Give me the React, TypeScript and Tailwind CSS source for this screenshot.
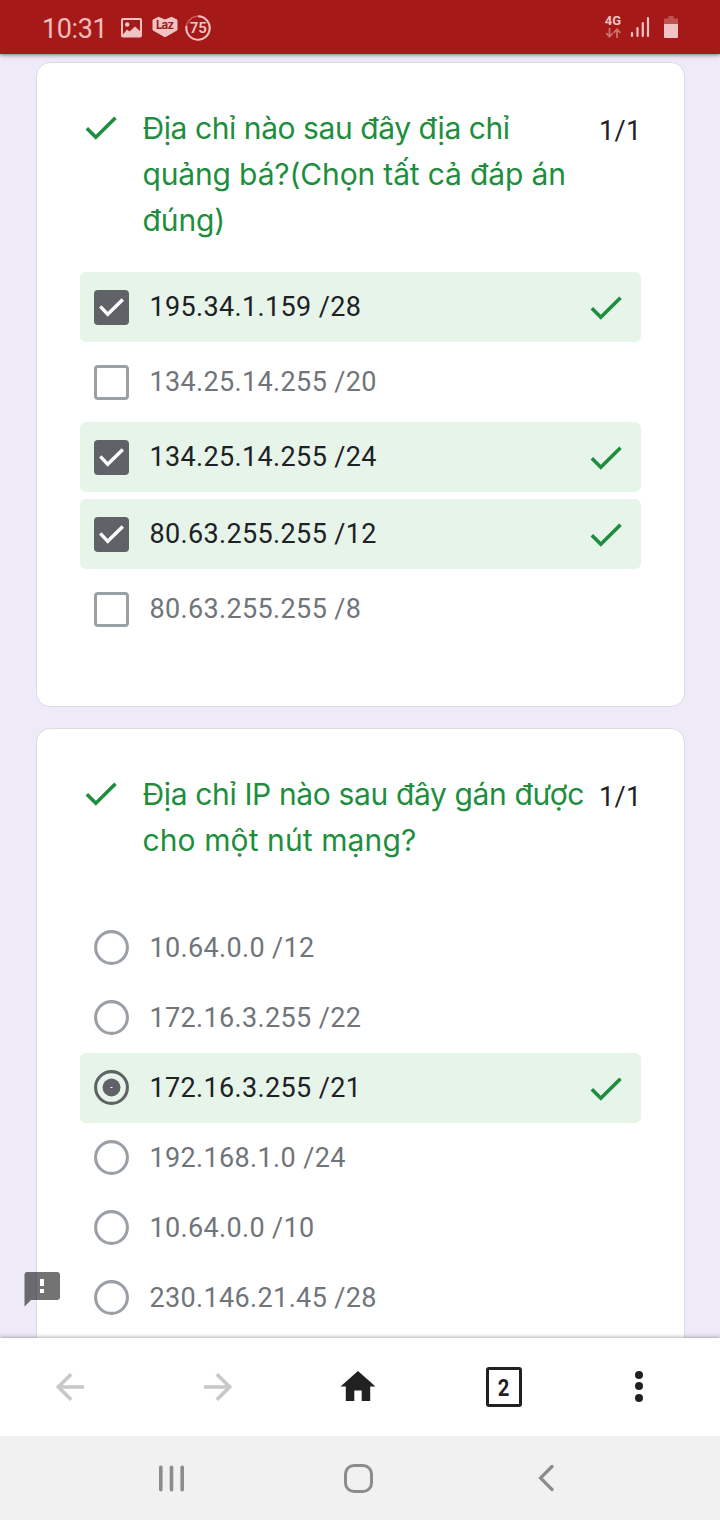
type Line = { text: string; spacing: string };
type Option = { label: string; checked?: boolean; gap?: string };

function GreenCheck({ className = "" }: { className?: string }) {
  return (
    <svg className={`block h-[42px] w-[42px] shrink-0 ${className}`} viewBox="0 0 42 42" fill="none" stroke="#1e8e3e" strokeWidth="3.6">
      <path d="M6.8 20.3 L15.8 29.3 L35.5 9.8" />
    </svg>
  );
}

function CheckBox({ checked }: { checked?: boolean }) {
  if (!checked) {
    return <span className="h-[35px] w-[35px] shrink-0 rounded-[4px] border-[3px] border-[#9aa0a6]" />;
  }
  return (
    <span className="flex h-[35px] w-[35px] shrink-0 items-center justify-center rounded-[4px] bg-[#5f6368]">
      <svg className="h-[35px] w-[35px]" viewBox="0 0 35 35" fill="none" stroke="#fff" strokeWidth="3.4">
        <path d="M6.3 16.3 L13.7 24.3 L28.8 9.5" />
      </svg>
    </span>
  );
}

function Radio({ checked }: { checked?: boolean }) {
  return (
    <svg className="mb-px h-[35px] w-[35px] shrink-0" viewBox="0 0 35 35">
      <circle cx="17.5" cy="17.5" r="15.9" fill="none" stroke={checked ? "#5f6368" : "#9aa0a6"} strokeWidth="3.1" />
      {checked && <circle cx="17.5" cy="17.5" r="9" fill="#5f6368" />}
      {checked && <rect x="16.5" y="17" width="2" height="1" fill="#fff" />}
    </svg>
  );
}

function Question({
  lines,
  options,
  kind,
  className,
  listClass,
}: {
  lines: Line[];
  options: Option[];
  kind: "check" | "radio";
  className: string;
  listClass: string;
}) {
  return (
    <section className={`ml-9 w-[649px] shrink-0 rounded-[14px] border border-[#dadce0] bg-white pt-[42px] pr-[43px] pl-[43px] ${className}`}>
      <header className="flex items-start">
        <div className="mt-[3px] w-[62.5px] shrink-0">
          <GreenCheck />
        </div>
        <h2 className="flex-1 font-['Inter','Noto_Sans',sans-serif] text-[30px] leading-[46px] font-normal whitespace-nowrap text-[#1e8e3e]">
          {lines.map((l) => (
            <span key={l.text} className={`block ${l.spacing}`}>
              {l.text}
            </span>
          ))}
        </h2>
        <span className="mt-[3px] w-[42px] shrink-0 text-[27px] leading-[46px] tracking-[0.4px] text-[#202124]">1/1</span>
      </header>
      <ul className={listClass}>
        {options.map((o) => (
          <li
            key={o.label}
            className={`flex h-[70px] items-center rounded-[6px] pr-[14px] pl-[14px] ${o.gap ?? ""} ${
              o.checked ? "bg-[#e6f4ea] text-[#202124]" : "text-[#70757a]"
            }`}
          >
            {kind === "check" ? <CheckBox checked={o.checked} /> : <Radio checked={o.checked} />}
            <span className="ml-[20.5px] flex-1 text-[27px] leading-[40px] tracking-[0.35px]">{o.label}</span>
            {o.checked && <GreenCheck className="mt-[3px]" />}
          </li>
        ))}
      </ul>
    </section>
  );
}

const broadcastLines: Line[] = [
  { text: "Địa chỉ nào sau đây địa chỉ", spacing: "tracking-[-0.43px]" },
  { text: "quảng bá?(Chọn tất cả đáp án", spacing: "tracking-[-0.15px]" },
  { text: "đúng)", spacing: "tracking-[-0.1px]" },
];
const hostLines: Line[] = [
  { text: "Địa chỉ IP nào sau đây gán được", spacing: "tracking-[-0.36px]" },
  { text: "cho một nút mạng?", spacing: "tracking-[0.1px]" },
];
const broadcastOptions: Option[] = [
  { label: "195.34.1.159 /28", checked: true },
  { label: "134.25.14.255 /20", gap: "mt-[5px]" },
  { label: "134.25.14.255 /24", checked: true, gap: "mt-[5px]" },
  { label: "80.63.255.255 /12", checked: true, gap: "mt-[7px]" },
  { label: "80.63.255.255 /8", gap: "mt-[5px]" },
];
const hostOptions: Option[] = [
  { label: "10.64.0.0 /12" },
  { label: "172.16.3.255 /22" },
  { label: "172.16.3.255 /21", checked: true },
  { label: "192.168.1.0 /24" },
  { label: "10.64.0.0 /10" },
  { label: "230.146.21.45 /28" },
];

function StatusBar() {
  return (
    <div className="z-10 flex h-[54px] shrink-0 items-center bg-[#a51a18] pl-[42px] text-[#f0c4c4] shadow-[0_1px_4px_rgba(0,0,0,0.5)]">
      <span className="w-[78px] pt-[3px] text-[27px] leading-[54px] tracking-[-0.4px] text-[#f3bcbc]">10:31</span>
      <svg className="mt-px h-[22px] w-[22px]" viewBox="0 0 22 22">
        <rect x="2" y="2" width="19" height="17.5" rx="1" fill="none" stroke="currentColor" strokeWidth="2" />
        <circle cx="7.2" cy="7.5" r="2.2" fill="currentColor" />
        <path d="M3 17.5 L7 12.5 L9.5 14.5 L15 9.5 L20 14 V19 H3 Z" fill="currentColor" />
      </svg>
      <svg className="mt-px ml-[9.5px] h-[24px] w-[26px]" viewBox="0 0 26 24">
        <path d="M1 4 L6.5 1.3 L13 4 L19.5 1.3 L25 4 V14 L13 20.8 L1 14 Z" fill="currentColor" stroke="currentColor" strokeWidth="1" strokeLinejoin="round" />
        <text x="13" y="13.2" textAnchor="middle" textLength="18" fontFamily="Inter, sans-serif" fontSize="11.5" fontWeight="700" fill="#a51a18">
          Laz
        </text>
      </svg>
      <svg className="mt-px ml-[6.5px] h-[28px] w-[28px]" viewBox="0 0 28 28">
        <circle cx="14" cy="14" r="11.7" fill="none" stroke="currentColor" strokeOpacity="0.4" strokeWidth="1.6" />
        <path d="M14 2.3 A11.7 11.7 0 1 1 2.5 12" fill="none" stroke="currentColor" strokeWidth="2" />
        <text x="14.2" y="19.3" textAnchor="middle" fontFamily="Roboto, sans-serif" fontSize="15" fontWeight="600" fill="currentColor">
          75
        </text>
      </svg>
      <div className="mb-[2px] ml-[392px] flex w-[18px] flex-col items-center">
        <span className="text-[13px] leading-[13px] font-bold">4G</span>
        <svg className="mt-px h-[10px] w-[16px]" viewBox="0 0 16 10" fill="none" stroke="currentColor" strokeOpacity="0.5" strokeWidth="1.8">
          <path d="M4.5 0 V8.5 M1.2 5.2 L4.5 8.8 L7.8 5.2 M12 10 V1.5 M8.7 4.8 L12 1.2 L15.3 4.8" />
        </svg>
      </div>
      <svg className="ml-[8px] h-[22px] w-[20px]" viewBox="0 0 20 22" stroke="currentColor" strokeWidth="2.2" strokeLinecap="round">
        <path d="M2 17 V20 M7.5 12 V20 M12.8 7 V20 M18 2 V20" />
      </svg>
      <svg className="ml-[14px] h-[22px] w-[14px]" viewBox="0 0 14 22" fill="currentColor">
        <path d="M4.5 0 H9.5 V2.5 H14 V8 H0 V2.5 H4.5 Z" opacity="0.35" />
        <path d="M0 8 H14 V21 Q14 22 13 22 H1 Q0 22 0 21 Z" />
      </svg>
    </div>
  );
}

export default function App() {
  return (
    <div className="relative flex h-[1520px] w-[720px] flex-col overflow-hidden bg-[#eeeaf8] font-['Roboto','Noto_Sans',sans-serif]">
      <StatusBar />
      <main className="flex h-[1284px] shrink-0 flex-col overflow-hidden pt-[8px]">
        <Question kind="check" lines={broadcastLines} options={broadcastOptions} className="h-[645px]" listClass="mt-[29px]" />
        <Question kind="radio" lines={hostLines} options={hostOptions} className="mt-[21px] h-[700px]" listClass="mt-[50px]" />
      </main>
      <svg className="absolute top-[1271px] left-[24px] h-[36px] w-[36px]" viewBox="0 0 36 36">
        <path
          fillRule="evenodd"
          d="M3 1 H33 Q36 1 36 4 V26 Q36 29 33 29 H7 L0.5 35.5 V4 Q0.5 1 3 1 Z M16 8 V15 H20 V8 Z M16 18 V22 H20 V18 Z"
          fill="#000"
          fillOpacity="0.55"
        />
        <path d="M16 8 H20 V15 H16 Z M16 18 H20 V22 H16 Z" fill="#fff" />
      </svg>
      <nav className="z-10 flex h-[98px] shrink-0 items-center bg-white pl-[56px] shadow-[0_-1px_4px_rgba(0,0,0,0.3)]">
        <svg className="h-[28px] w-[28px]" viewBox="0 0 28 28" fill="none" stroke="#c8c8c8" strokeWidth="3.6">
          <path d="M28 14 H2.5 M15.2 1.2 L2.4 14 L15.2 26.8" />
        </svg>
        <svg className="ml-[120px] h-[28px] w-[28px]" viewBox="0 0 28 28" fill="none" stroke="#c8c8c8" strokeWidth="3.6">
          <path d="M0 14 H25.5 M12.8 1.2 L25.6 14 L12.8 26.8" />
        </svg>
        <svg className="mb-[2px] ml-[108px] h-[30px] w-[36px]" viewBox="0 0 36 30" fill="#212121">
          <path d="M18 0 L35.5 15.5 H30.2 V30 H21.7 V19.5 H14.3 V30 H5.8 V15.5 H0.5 Z" />
        </svg>
        <span className="ml-[110px] flex h-[40px] w-[36px] items-center justify-center rounded-[3px] border-[3px] border-[#212121] pt-[2px] text-[23px] leading-none font-bold text-[#212121]">
          <span className="mr-px scale-x-[0.88]">2</span>
        </span>
        <span className="mb-[2px] ml-[113px] flex flex-col gap-[3.5px]">
          <span className="h-[8px] w-[8px] rounded-full bg-[#212121]" />
          <span className="h-[8px] w-[8px] rounded-full bg-[#212121]" />
          <span className="h-[8px] w-[8px] rounded-full bg-[#212121]" />
        </span>
      </nav>
      <footer className="z-20 flex h-[84px] shrink-0 items-center bg-[#f1f1f1] pl-[158px]">
        <svg className="h-[27px] w-[27px]" viewBox="0 0 27 27" stroke="#8c8c8c" strokeWidth="3.6" strokeLinecap="round">
          <path d="M2.8 2.3 V24.7 M13.5 2.3 V24.7 M24.2 2.3 V24.7" />
        </svg>
        <span className="ml-[159px] h-[29px] w-[29px] rounded-[10px] border-[3px] border-[#8c8c8c]" />
        <svg className="ml-[165px] h-[28px] w-[16px]" viewBox="0 0 16 28" fill="none" stroke="#8c8c8c" strokeWidth="3.2" strokeLinecap="round">
          <path d="M14 2.5 L2.5 14 L14 25.5" />
        </svg>
      </footer>
    </div>
  );
}
